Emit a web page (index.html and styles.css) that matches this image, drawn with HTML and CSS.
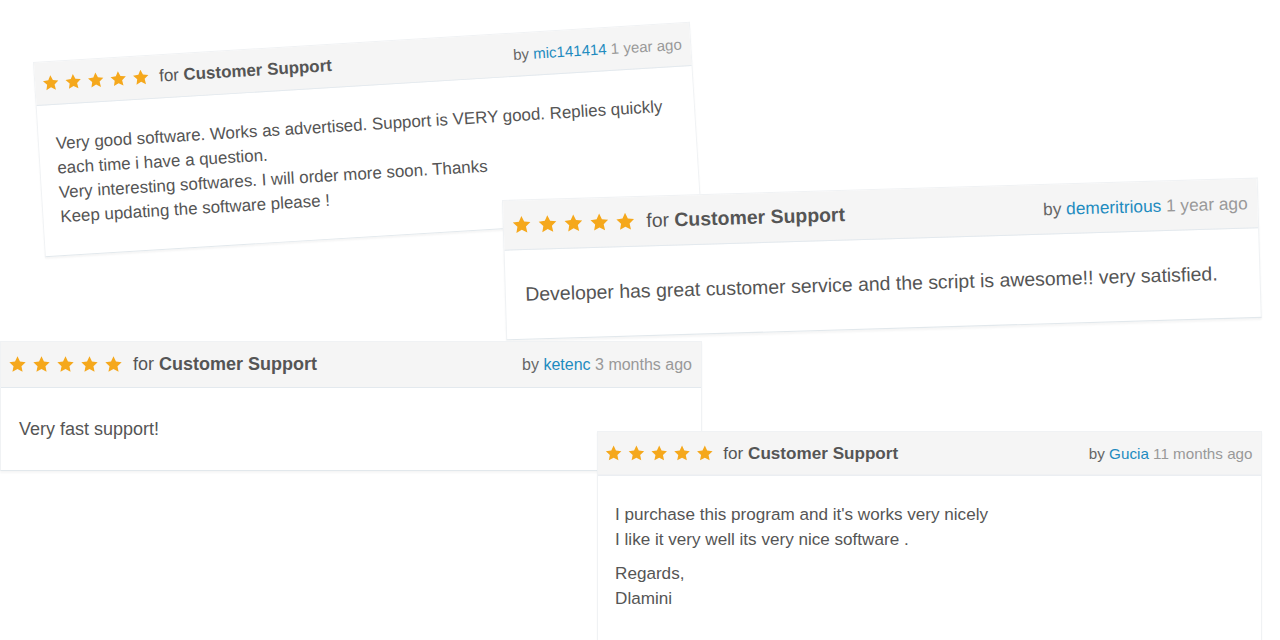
FILE: index.html
```html
<!DOCTYPE html>
<html lang="en">
<head>
<meta charset="utf-8">
<title>Customer Support Reviews</title>
<link rel="stylesheet" href="styles.css">
</head>
<body>
<svg class="defs" width="0" height="0" aria-hidden="true">
  <symbol id="star" viewBox="0 0 24 24">
    <path d="M12 1.6l3.1 6.6 7.2.9-5.3 5 1.4 7.2L12 17.8l-6.4 3.5 1.4-7.2-5.3-5 7.2-.9z"/>
  </symbol>
</svg>
<main class="canvas">

  <article class="card card--one">
    <header class="card__head">
      <div class="card__title">
        <span class="stars"><svg class="star"><use href="#star"/></svg><svg class="star"><use href="#star"/></svg><svg class="star"><use href="#star"/></svg><svg class="star"><use href="#star"/></svg><svg class="star"><use href="#star"/></svg></span>
        <span class="for">for <b>Customer Support</b></span>
      </div>
      <div class="meta">by <a class="user">mic141414</a> <span class="ago">1 year ago</span></div>
    </header>
    <div class="card__body">
      <p>Very good software. Works as advertised. Support is VERY good. Replies quickly<br>each time i have a question.<br>Very interesting softwares. I will order more soon. Thanks<br>Keep updating the software please !</p>
    </div>
  </article>

  <article class="card card--two">
    <header class="card__head">
      <div class="card__title">
        <span class="stars"><svg class="star"><use href="#star"/></svg><svg class="star"><use href="#star"/></svg><svg class="star"><use href="#star"/></svg><svg class="star"><use href="#star"/></svg><svg class="star"><use href="#star"/></svg></span>
        <span class="for">for <b>Customer Support</b></span>
      </div>
      <div class="meta">by <a class="user">demeritrious</a> <span class="ago">1 year ago</span></div>
    </header>
    <div class="card__body">
      <p>Developer has great customer service and the script is awesome!! very satisfied.</p>
    </div>
  </article>

  <article class="card card--three">
    <header class="card__head">
      <div class="card__title">
        <span class="stars"><svg class="star"><use href="#star"/></svg><svg class="star"><use href="#star"/></svg><svg class="star"><use href="#star"/></svg><svg class="star"><use href="#star"/></svg><svg class="star"><use href="#star"/></svg></span>
        <span class="for">for <b>Customer Support</b></span>
      </div>
      <div class="meta">by <a class="user">ketenc</a> <span class="ago">3 months ago</span></div>
    </header>
    <div class="card__body">
      <p>Very fast support!</p>
    </div>
  </article>

  <article class="card card--four">
    <header class="card__head">
      <div class="card__title">
        <span class="stars"><svg class="star"><use href="#star"/></svg><svg class="star"><use href="#star"/></svg><svg class="star"><use href="#star"/></svg><svg class="star"><use href="#star"/></svg><svg class="star"><use href="#star"/></svg></span>
        <span class="for">for <b>Customer Support</b></span>
      </div>
      <div class="meta">by <a class="user">Gucia</a> <span class="ago">11 months ago</span></div>
    </header>
    <div class="card__body card__body--tall">
      <p>I purchase this program and it's works very nicely<br>I like it very well its very nice software .</p>
      <p>Regards,<br>Dlamini</p>
    </div>
  </article>

</main>
</body>
</html>
```

FILE: styles.css
```css
* {
  box-sizing: border-box;
}

html,
body {
  margin: 0;
  padding: 0;
  background: #ffffff;
}

body {
  font-family: "Liberation Sans", Arial, sans-serif;
  color: #555555;
}

.defs {
  position: absolute;
  width: 0;
  height: 0;
  overflow: hidden;
}

.canvas {
  position: relative;
  width: 1280px;
  height: 640px;
  overflow: hidden;
}

.card {
  position: absolute;
  width: 700px;
  background: #ffffff;
  border: 1px solid #f0f2f4;
  border-bottom: 1px solid #e2e8ec;
  box-shadow: 0 2px 2px rgba(0, 0, 0, 0.04);
  transform-origin: 0 0;
}

.card--one {
  left: 33px;
  top: 62px;
  transform: rotate(-3.5deg) scale(0.94);
}

.card--two {
  left: 502px;
  top: 200px;
  transform: rotate(-1.7deg) scale(1.08);
}

.card--three {
  left: 0;
  top: 341px;
  width: 702px;
}

.card--four {
  left: 597px;
  top: 431px;
  transform: scale(0.95);
}

.card__head {
  display: flex;
  align-items: center;
  justify-content: space-between;
  height: 46px;
  padding: 0 9px 0 7px;
  background: #f5f5f5;
  border-bottom: 1px solid #e3e9ee;
}

.card__title {
  display: flex;
  align-items: center;
  gap: 10px;
}

.stars {
  display: flex;
  gap: 5px;
}

.star {
  width: 19px;
  height: 19px;
  fill: #f5a81c;
}

.for {
  font-size: 18px;
  color: #555555;
}

.for b {
  font-weight: 700;
}

.meta {
  font-size: 16px;
  color: #666666;
}

.user {
  color: #1e8bbf;
  text-decoration: none;
}

.ago {
  color: #999999;
}

.card__body {
  padding: 28px 18px;
  font-size: 18px;
  line-height: 26px;
}

.card__body--tall {
  padding-bottom: 80px;
}

.card__body p {
  margin: 0;
}

.card__body p + p {
  margin-top: 10px;
}
```
